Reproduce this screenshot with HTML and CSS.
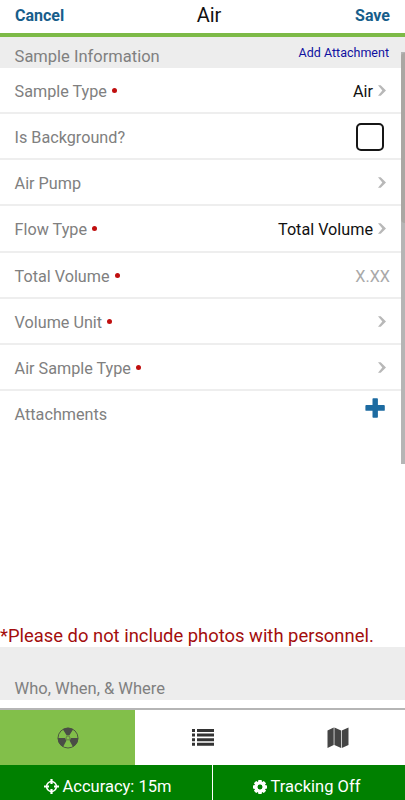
FILE: index.html
```
<!DOCTYPE html>
<html lang="en">
<head>
<meta charset="utf-8">
<title>Air</title>
<link rel="stylesheet" href="styles.css">
</head>
<body>
<svg width="0" height="0" class="defs">
  <symbol id="chevron" viewBox="0 0 8 11"><path d="M0 .2h2.700L8 5.400 2.700 10.700H0l4.300-5.300z" fill="#b8b8b8"/></symbol>
</svg>
<div class="app">
  <header class="bar">
    <a class="action">Cancel</a>
    <h1>Air</h1>
    <a class="action save">Save</a>
  </header>
  <main class="form">
    <div class="section"><span>Sample Information</span><a class="add">Add Attachment</a></div>
    <div class="row"><span class="label req">Sample Type</span><span class="value">Air</span><svg class="chev"><use href="#chevron"/></svg></div>
    <div class="row"><span class="label">Is Background?</span><span class="box"></span></div>
    <div class="row"><span class="label">Air Pump</span><svg class="chev"><use href="#chevron"/></svg></div>
    <div class="row tall"><span class="label req">Flow Type</span><span class="value">Total Volume</span><svg class="chev"><use href="#chevron"/></svg></div>
    <div class="row"><span class="label req">Total Volume</span><span class="hint">X.XX</span></div>
    <div class="row"><span class="label req">Volume Unit</span><svg class="chev"><use href="#chevron"/></svg></div>
    <div class="row"><span class="label req">Air Sample Type</span><svg class="chev"><use href="#chevron"/></svg></div>
    <div class="row attachments"><span class="label">Attachments</span>
      <svg class="plus" viewBox="0 0 20 20"><path d="M8.300.2h3.800q.8 0 .8.8v6.100h6q.9 0 .9.900v3.900q0 .9-.9.900h-6v6.200q0 .8-.8.800H8.300q-.8 0-.8-.8v-6.200H1.300q-.9 0-.9-.9V8q0-.9.9-.9h6.200V1q0-.8.8-.8z" fill="#1d6ba1"/></svg>
    </div>
    <p class="warning">*Please do not include photos with personnel.</p>
    <div class="section who"><span>Who, When, &amp; Where</span></div>
    <div class="scrollbar"><i></i></div>
  </main>
  <nav class="tabs">
    <a class="tab active"><svg width="22" height="22" viewBox="-11 -11 22 22">
      <circle r="10" fill="none" stroke="#4d5840" stroke-width="1"/>
      <g fill="#4a4d46"><path id="blade" d="M-1.300-2.500-5.200-8.800A10.200 10.200 0 0 1 5.200-8.800L1.300-2.500A2.800 2.800 0 0 0-1.300-2.500z"/><use href="#blade" transform="rotate(120)"/><use href="#blade" transform="rotate(240)"/></g>
      <circle r="2" fill="#82bf4a" stroke="#5d7046" stroke-width=".8"/>
    </svg></a>
    <a class="tab"><svg width="22" height="17" viewBox="0 0 22 17" fill="#333"><path d="M0 0h3v3H0zM0 4.600h3v3H0zM0 9.200h3v3H0zM0 13.800h3v3H0zM5 0h17v3H5zM5 4.600h17v3H5zM5 9.200h17v3H5zM5 13.800h17v3H5z"/></svg></a>
    <a class="tab"><svg width="22" height="22" viewBox="0 0 22 22" fill="#444"><path d="M.5 3.500 6.700.5v17.500l-6.200 3zM7.400.5l6.700 3v17.500l-6.700-3zM14.800 3.500l6.700-3v17.500l-6.700 3z"/></svg></a>
  </nav>
  <footer class="status">
    <div class="cell first"><svg width="15" height="15" viewBox="0 0 15 15"><circle cx="7.500" cy="7.500" r="4.900" fill="none" stroke="#fff" stroke-width="1.500"/><path d="M6.400 0h2.200v5H6.400zM6.400 10h2.200v5H6.400zM0 6.400h5v2.200H0zM10 6.400h5v2.200h-5z" fill="#fff"/></svg><span>Accuracy: 15m</span></div>
    <div class="cell"><svg width="14" height="14" viewBox="-7 -7 14 14"><g fill="#fff"><path id="tooth" d="M-1.600-7h3.200l.6 3h-4.400zM-1.600 7h3.200l.6-3h-4.400z"/><use href="#tooth" transform="rotate(45)"/><use href="#tooth" transform="rotate(90)"/><use href="#tooth" transform="rotate(135)"/></g><circle r="3.900" fill="none" stroke="#fff" stroke-width="3"/><circle r="2.300" fill="#008000"/></svg><span>Tracking Off</span></div>
  </footer>
</div>
</body>
</html>
```
FILE: styles.css
```
* { box-sizing: border-box; }
body { margin: 0; background: #fff; font-family: Roboto, "Liberation Sans", sans-serif; font-size: 16.2px; color: #808080; }
.defs { position: absolute; }
.app { width: 405px; height: 800px; display: flex; flex-direction: column; overflow: hidden; white-space: nowrap; }
.bar { height: 37px; padding: 0 15px; border-bottom: 4px solid #7dba47; display: grid; grid-template-columns: 1fr auto 1fr; align-items: center; padding-bottom: 3px; }
.bar h1 { margin: 0 0 0 13px; font-size: 20px; font-weight: 400; color: #111; }
.action { font-size: 16px; font-weight: 700; color: #175e8b; }
.save { text-align: right; }
.form { position: relative; height: 671px; }
.section { height: 31px; padding: 7px 15px 0 14.600px; background: #ededed; display: flex; justify-content: space-between; align-items: center; font-size: 16.5px; }
.add { font-size: 12.5px; color: #1010a0; padding-bottom: 7px; margin-right: 1px; }
.row { height: 46px; padding: 0 15px 0 14.600px; border-bottom: 2px solid #eee; display: flex; align-items: center; }
.tall { height: 47px; }
.label { flex: 1; padding-top: 2px; }
.row:not(.tall) .label { padding-top: 3px; }
.req::after { content: ""; display: inline-block; width: 5px; height: 5px; border-radius: 50%; background: #c00f0f; margin-left: 5px; vertical-align: 4px; }
.value { color: #111; margin-right: 5px; padding-top: 3px; }
.tall .value { padding-top: 2px; }
.hint { color: #a9a9a9; padding-top: 3px; }
.chev { width: 8px; height: 11px; margin-right: 4px; }
.box { width: 28px; height: 28px; border: 2px solid #161616; border-radius: 5px; margin: 2px 6px 0 0; }
.attachments { border: 0; height: 233px; align-items: flex-start; padding-top: 11px; }
.plus { width: 20px; height: 20px; margin: -4px 5px 0 0; }
.warning { margin: 0; height: 23px; line-height: 23px; font-size: 18.4px; color: #a30d0d; }
.who { height: 53px; padding-top: 30px; }
.scrollbar { position: absolute; right: 0; top: 15px; width: 4px; height: 412px; background: #b5b5b5; }
.scrollbar i { display: block; height: 170px; margin-top: 1px; background: #aaa7a3; border-radius: 4px 0 0 4px; }
.tabs { height: 57px; border-top: 2px solid #b5b5b5; display: grid; grid-template-columns: repeat(3, 1fr); background: #fff; }
.tab { display: flex; align-items: center; justify-content: center; }
.active { background: #82bf4a; }
.status { height: 35px; display: grid; grid-template-columns: 213px 1fr; background: #008000; color: #fff; font-size: 16.5px; }
.cell { display: flex; align-items: center; justify-content: center; gap: 4px; padding-top: 8px; padding-right: 5px; }
.first { border-right: 1px solid #fff; padding: 8px 3px 0 6px; }
```
